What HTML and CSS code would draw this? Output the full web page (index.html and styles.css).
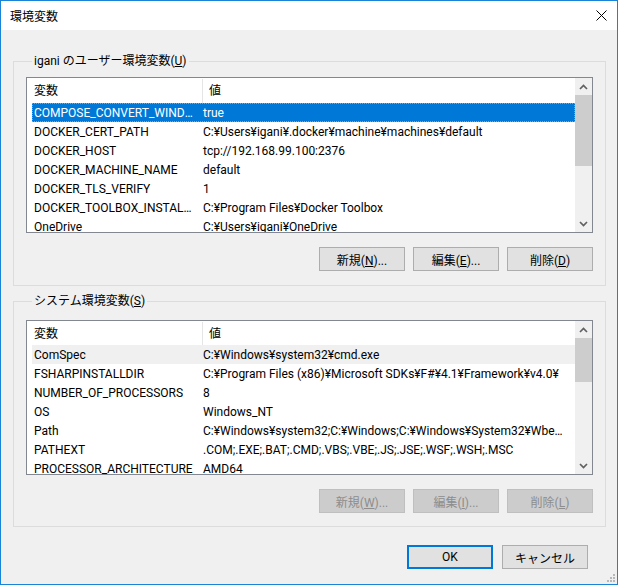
FILE: index.html
```html
<!DOCTYPE html>
<html lang="ja">
<head>
    <meta charset="UTF-8">
    <title>環境変数</title>
    <link rel="stylesheet" href="styles.css">
</head>
<body>
    <div class="window">
        <div class="titlebar">
            <span class="title">環境変数</span>
            <svg class="close" width="11" height="11" viewBox="0 0 11 11">
                <path d="M0.5 0.5 L10.5 10.5 M10.5 0.5 L0.5 10.5" stroke="#000" stroke-width="1" fill="none"/>
            </svg>
        </div>

        <div class="content">
            <fieldset class="group group-user">
                <legend>igani のユーザー環境変数(<u>U</u>)</legend>
                <div class="list list-user">
                    <div class="list-body">
                        <div class="list-head"><span class="col-name">変数</span><span class="col-value">値</span></div>
                        <div class="row selected"><span class="col-name">COMPOSE_CONVERT_WINDOWS_PATHS</span><span class="col-value">true</span></div>
                        <div class="row"><span class="col-name">DOCKER_CERT_PATH</span><span class="col-value">C:¥Users¥igani¥.docker¥machine¥machines¥default</span></div>
                        <div class="row"><span class="col-name">DOCKER_HOST</span><span class="col-value">tcp://192.168.99.100:2376</span></div>
                        <div class="row"><span class="col-name">DOCKER_MACHINE_NAME</span><span class="col-value">default</span></div>
                        <div class="row"><span class="col-name">DOCKER_TLS_VERIFY</span><span class="col-value">1</span></div>
                        <div class="row"><span class="col-name">DOCKER_TOOLBOX_INSTALL_PATH</span><span class="col-value">C:¥Program Files¥Docker Toolbox</span></div>
                        <div class="row"><span class="col-name">OneDrive</span><span class="col-value">C:¥Users¥igani¥OneDrive</span></div>
                    </div>
                    <div class="scrollbar">
                        <div class="sb-btn"><svg width="9" height="6" viewBox="0 0 9 6"><path d="M1 5 L4.5 1.5 L8 5" stroke="#606060" stroke-width="1.7" fill="none"/></svg></div>
                        <div class="sb-track"><div class="sb-thumb"></div></div>
                        <div class="sb-btn"><svg width="9" height="6" viewBox="0 0 9 6"><path d="M1 1 L4.5 4.5 L8 1" stroke="#606060" stroke-width="1.7" fill="none"/></svg></div>
                    </div>
                </div>
                <div class="buttons">
                    <button>新規(<u>N</u>)...</button>
                    <button>編集(<u>E</u>)...</button>
                    <button>削除(<u>D</u>)</button>
                </div>
            </fieldset>

            <fieldset class="group group-system">
                <legend>システム環境変数(<u>S</u>)</legend>
                <div class="list list-system">
                    <div class="list-body">
                        <div class="list-head"><span class="col-name">変数</span><span class="col-value">値</span></div>
                        <div class="row inactive"><span class="col-name">ComSpec</span><span class="col-value">C:¥Windows¥system32¥cmd.exe</span></div>
                        <div class="row"><span class="col-name">FSHARPINSTALLDIR</span><span class="col-value">C:¥Program Files (x86)¥Microsoft SDKs¥F#¥4.1¥Framework¥v4.0¥</span></div>
                        <div class="row"><span class="col-name">NUMBER_OF_PROCESSORS</span><span class="col-value">8</span></div>
                        <div class="row"><span class="col-name">OS</span><span class="col-value">Windows_NT</span></div>
                        <div class="row"><span class="col-name">Path</span><span class="col-value">C:¥Windows¥system32;C:¥Windows;C:¥Windows¥System32¥Wbem;C:¥Windows¥System32¥WindowsPowerShell¥v1.0¥</span></div>
                        <div class="row"><span class="col-name">PATHEXT</span><span class="col-value">.COM;.EXE;.BAT;.CMD;.VBS;.VBE;.JS;.JSE;.WSF;.WSH;.MSC</span></div>
                        <div class="row"><span class="col-name">PROCESSOR_ARCHITECTURE</span><span class="col-value">AMD64</span></div>
                    </div>
                    <div class="scrollbar">
                        <div class="sb-btn"><svg width="9" height="6" viewBox="0 0 9 6"><path d="M1 5 L4.5 1.5 L8 5" stroke="#606060" stroke-width="1.7" fill="none"/></svg></div>
                        <div class="sb-track"><div class="sb-thumb"></div></div>
                        <div class="sb-btn"><svg width="9" height="6" viewBox="0 0 9 6"><path d="M1 1 L4.5 4.5 L8 1" stroke="#606060" stroke-width="1.7" fill="none"/></svg></div>
                    </div>
                </div>
                <div class="buttons">
                    <button disabled>新規(<u>W</u>)...</button>
                    <button disabled>編集(<u>I</u>)...</button>
                    <button disabled>削除(<u>L</u>)</button>
                </div>
            </fieldset>

            <div class="dialog-buttons">
                <button class="default">OK</button>
                <button>キャンセル</button>
            </div>
        </div>

        <svg class="grip" width="8" height="8" viewBox="0 0 8 8">
            <rect x="6" y="0" width="2" height="2" fill="#b8b8b8"/>
            <rect x="3" y="3" width="2" height="2" fill="#b8b8b8"/>
            <rect x="6" y="3" width="2" height="2" fill="#b8b8b8"/>
            <rect x="0" y="6" width="2" height="2" fill="#b8b8b8"/>
            <rect x="3" y="6" width="2" height="2" fill="#b8b8b8"/>
            <rect x="6" y="6" width="2" height="2" fill="#b8b8b8"/>
        </svg>
    </div>
</body>
</html>
```

FILE: styles.css
```css
body {
    margin: 0;
    font-family: Roboto, "Noto Sans CJK JP", sans-serif;
    font-size: 12px;
    color: #000;
}

.window {
    position: relative;
    box-sizing: border-box;
    width: 618px;
    height: 585px;
    border: 1px solid #1883d7;
    background: #f0f0f0;
    display: flex;
    flex-direction: column;
}

.titlebar {
    height: 29px;
    background: #fff;
    display: flex;
    align-items: center;
    justify-content: space-between;
    padding-left: 9px;
    padding-right: 10px;
}

.content {
    padding: 0 11px 0 12px;
}

.group {
    min-width: 0;
    margin: 0;
    border: 1px solid #dcdcdc;
    padding: 8px 12px 14px 12px;
}

.group legend {
    margin-left: 6px;
    padding: 0 2px;
    line-height: 16px;
}

.group-user {
    margin-top: 23px;
}

.group-system {
    margin-top: 7px;
    padding-top: 11px;
    padding-bottom: 13px;
}

.list {
    display: flex;
    height: 156px;
    box-sizing: border-box;
    border: 1px solid #828790;
    background: #fff;
}

.list-system {
    height: 155px;
}

.list-body {
    flex: 1;
    min-width: 0;
    overflow: hidden;
}

.list-head {
    display: flex;
    box-sizing: border-box;
    height: 25px;
    padding-top: 1px;
    line-height: 24px;
}

.list-system .list-head {
    height: 24px;
}

.list-head .col-name {
    width: 168px;
    padding-left: 7px;
    border-right: 1px solid #e5e5e5;
}

.list-head .col-value {
    padding-left: 6px;
}

.row {
    display: flex;
    box-sizing: border-box;
    height: 19px;
    padding-top: 1px;
    line-height: 19px;
    margin-left: 5px;
    white-space: nowrap;
}

.row .col-name {
    width: 162px;
    padding-left: 2px;
    flex-shrink: 0;
    overflow: hidden;
    text-overflow: ellipsis;
}

.row .col-value {
    flex: 1;
    min-width: 0;
    padding-left: 7px;
    padding-right: 2px;
    overflow: hidden;
    text-overflow: ellipsis;
}

.row.selected {
    background: #0078d7;
    color: #fff;
    outline: 1px dotted #ff8728;
    outline-offset: -1px;
}

.row.inactive {
    background: #f0f0f0;
}

.scrollbar {
    width: 17px;
    flex-shrink: 0;
    background: #f0f0f0;
    display: flex;
    flex-direction: column;
}

.sb-btn {
    height: 17px;
    display: flex;
    align-items: center;
    justify-content: center;
}

.sb-track {
    flex: 1;
}

.sb-thumb {
    background: #cdcdcd;
    height: 71px;
}

.list-system .sb-thumb {
    height: 44px;
}

.buttons {
    display: flex;
    justify-content: flex-end;
    gap: 8px;
    margin-top: 14px;
}

button {
    box-sizing: border-box;
    width: 86px;
    height: 24px;
    padding: 0;
    font-family: inherit;
    font-size: 12px;
    color: #000;
    background: #e1e1e1;
    border: 1px solid #adadad;
}

button:disabled {
    background: #cccccc;
    border-color: #bfbfbf;
    color: #8d8d8d;
}

button.default {
    border: 2px solid #0078d7;
}

.dialog-buttons {
    display: flex;
    justify-content: flex-end;
    gap: 9px;
    margin-top: 18px;
    margin-right: 18px;
}

.grip {
    position: absolute;
    right: 2px;
    bottom: 2px;
}
```
